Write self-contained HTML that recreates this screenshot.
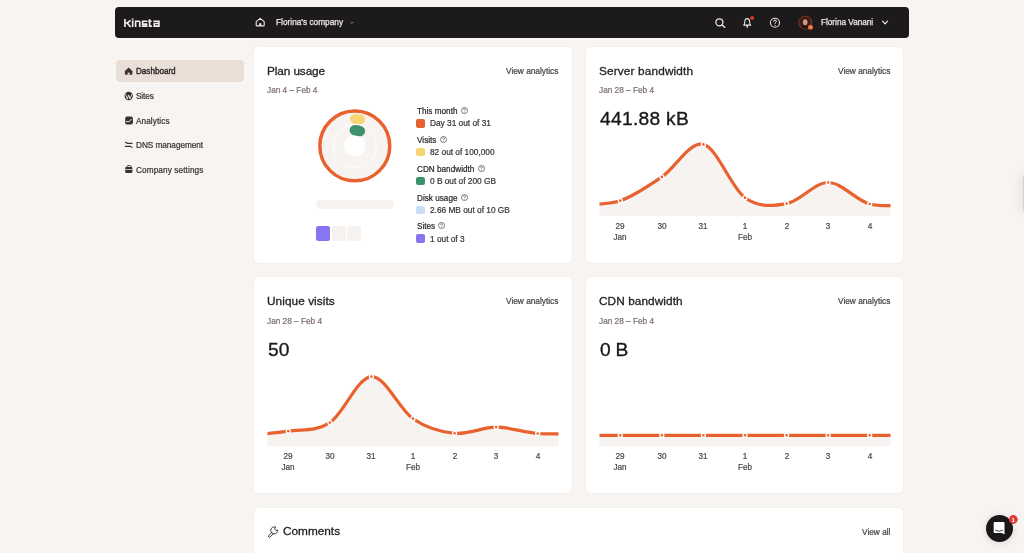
<!DOCTYPE html><html><head><meta charset="utf-8"><style>
html,body{margin:0;padding:0}
body{width:1024px;height:553px;overflow:hidden;background:#f7f4f1;position:relative;font-family:"Liberation Sans",sans-serif}
.t{position:absolute;white-space:nowrap;line-height:1;will-change:transform}
.card{position:absolute;background:#fff;border-radius:5px;box-shadow:0 0 0 0.5px rgba(140,110,90,0.06)}
.abs{position:absolute}
svg.L{position:absolute;left:0;top:0;overflow:visible}
svg.h{position:absolute;margin-left:3.2px;width:7px;height:7px;top:-1.1px}
</style></head><body>
<div class="abs" style="left:115px;top:7px;width:794px;height:30.6px;background:#1c1a1a;border-radius:4px"></div>
<div class="card" style="left:254px;top:47px;width:318px;height:216px"></div>
<div class="card" style="left:586px;top:47px;width:317.3px;height:216px"></div>
<div class="card" style="left:254px;top:277px;width:318px;height:216px"></div>
<div class="card" style="left:586px;top:277px;width:317.3px;height:216px"></div>
<div class="card" style="left:254px;top:507.5px;width:649.3px;height:100px"></div>
<div class="abs" style="left:115.5px;top:60px;width:128.8px;height:22.2px;background:#e9dfd7;border-radius:4px"></div>
<div class="t" style="left:276px;top:18px;font-size:8.3px;color:#ebe7e3;-webkit-text-stroke:0.25px #ebe7e3;">Florina's company</div>
<div class="t" style="left:820.7px;top:19px;font-size:8.2px;color:#ebe7e3;-webkit-text-stroke:0.25px #ebe7e3;">Florina Vanani</div>
<div class="t" style="left:136.3px;top:68px;font-size:8.2px;color:#2a2424;letter-spacing:-0.05px;-webkit-text-stroke:0.35px #2a2424;">Dashboard</div>
<div class="t" style="left:136.3px;top:93px;font-size:8.2px;color:#3a3232;letter-spacing:-0.1px;-webkit-text-stroke:0.22px #3a3232;">Sites</div>
<div class="t" style="left:136.3px;top:118px;font-size:8.2px;color:#3a3232;letter-spacing:0.1px;-webkit-text-stroke:0.22px #3a3232;">Analytics</div>
<div class="t" style="left:136.3px;top:142px;font-size:8.2px;color:#3a3232;letter-spacing:-0.02px;-webkit-text-stroke:0.22px #3a3232;">DNS management</div>
<div class="t" style="left:136.3px;top:167px;font-size:8.2px;color:#3a3232;letter-spacing:0.12px;-webkit-text-stroke:0.22px #3a3232;">Company settings</div>
<div class="t" style="left:267.1px;top:66px;font-size:11.8px;color:#262222;letter-spacing:-0.1px;-webkit-text-stroke:0.3px #262222;">Plan usage</div>
<div class="t" style="left:267.3px;top:87px;font-size:8.25px;color:#7e6f6f;-webkit-text-stroke:0.22px #7e6f6f;">Jan 4 – Feb 4</div>
<div class="t" style="right:465.4px;top:67px;font-size:8.3px;color:#4a4444;-webkit-text-stroke:0.22px #4a4444;">View analytics</div>
<div class="t" style="left:599.1px;top:66px;font-size:11.8px;color:#262222;letter-spacing:0.15px;-webkit-text-stroke:0.3px #262222;">Server bandwidth</div>
<div class="t" style="left:599.3px;top:87px;font-size:8.25px;color:#7e6f6f;-webkit-text-stroke:0.22px #7e6f6f;">Jan 28 – Feb 4</div>
<div class="t" style="right:133.39999999999998px;top:67px;font-size:8.3px;color:#4a4444;-webkit-text-stroke:0.22px #4a4444;">View analytics</div>
<div class="t" style="left:267.1px;top:296px;font-size:11.8px;color:#262222;letter-spacing:0.07px;-webkit-text-stroke:0.3px #262222;">Unique visits</div>
<div class="t" style="left:267.3px;top:318px;font-size:8.25px;color:#7e6f6f;-webkit-text-stroke:0.22px #7e6f6f;">Jan 28 – Feb 4</div>
<div class="t" style="right:465.4px;top:297px;font-size:8.3px;color:#4a4444;-webkit-text-stroke:0.22px #4a4444;">View analytics</div>
<div class="t" style="left:599.1px;top:296px;font-size:11.8px;color:#262222;letter-spacing:0.08px;-webkit-text-stroke:0.3px #262222;">CDN bandwidth</div>
<div class="t" style="left:599.3px;top:318px;font-size:8.25px;color:#7e6f6f;-webkit-text-stroke:0.22px #7e6f6f;">Jan 28 – Feb 4</div>
<div class="t" style="right:133.39999999999998px;top:297px;font-size:8.3px;color:#4a4444;-webkit-text-stroke:0.22px #4a4444;">View analytics</div>
<div class="t" style="left:600.0px;top:109px;font-size:19.2px;color:#1c1818;letter-spacing:0.3px;-webkit-text-stroke:0.35px #1c1818;">441.88 kB</div>
<div class="t" style="left:267.9px;top:340px;font-size:19.2px;color:#1c1818;letter-spacing:0.1px;-webkit-text-stroke:0.35px #1c1818;">50</div>
<div class="t" style="left:599.9px;top:340px;font-size:19.2px;color:#1c1818;letter-spacing:-0.2px;-webkit-text-stroke:0.35px #1c1818;">0 B</div>
<div class="t" style="left:416.6px;top:108px;font-size:8.2px;color:#2a2424;-webkit-text-stroke:0.2px #2a2424;">This month<svg class="h" viewBox="0 0 7 7"><circle cx="3.5" cy="3.5" r="3.05" fill="none" stroke="#5a5454" stroke-width="0.75"/><path d="M2.5,2.7 Q2.5,1.7 3.5,1.7 Q4.5,1.7 4.5,2.6 Q4.5,3.2 3.6,3.6 V4.2" fill="none" stroke="#5a5454" stroke-width="0.7"/><circle cx="3.6" cy="5.2" r="0.42" fill="#5a5454"/></svg></div>
<div class="abs" style="left:416.3px;top:118.75px;width:8.8px;height:8.8px;border-radius:2px;background:#e8622f"></div>
<div class="t" style="left:429.8px;top:119px;font-size:8.3px;color:#3a3434;-webkit-text-stroke:0.22px #3a3434;">Day 31 out of 31</div>
<div class="t" style="left:416.6px;top:137px;font-size:8.2px;color:#2a2424;-webkit-text-stroke:0.2px #2a2424;">Visits<svg class="h" viewBox="0 0 7 7"><circle cx="3.5" cy="3.5" r="3.05" fill="none" stroke="#5a5454" stroke-width="0.75"/><path d="M2.5,2.7 Q2.5,1.7 3.5,1.7 Q4.5,1.7 4.5,2.6 Q4.5,3.2 3.6,3.6 V4.2" fill="none" stroke="#5a5454" stroke-width="0.7"/><circle cx="3.6" cy="5.2" r="0.42" fill="#5a5454"/></svg></div>
<div class="abs" style="left:416.3px;top:147.50px;width:8.8px;height:8.8px;border-radius:2px;background:#f6d572"></div>
<div class="t" style="left:429.8px;top:148px;font-size:8.3px;color:#3a3434;-webkit-text-stroke:0.22px #3a3434;">82 out of 100,000</div>
<div class="t" style="left:416.6px;top:166px;font-size:8.2px;color:#2a2424;-webkit-text-stroke:0.2px #2a2424;">CDN bandwidth<svg class="h" viewBox="0 0 7 7"><circle cx="3.5" cy="3.5" r="3.05" fill="none" stroke="#5a5454" stroke-width="0.75"/><path d="M2.5,2.7 Q2.5,1.7 3.5,1.7 Q4.5,1.7 4.5,2.6 Q4.5,3.2 3.6,3.6 V4.2" fill="none" stroke="#5a5454" stroke-width="0.7"/><circle cx="3.6" cy="5.2" r="0.42" fill="#5a5454"/></svg></div>
<div class="abs" style="left:416.3px;top:176.50px;width:8.8px;height:8.8px;border-radius:2px;background:#3e926b"></div>
<div class="t" style="left:429.8px;top:177px;font-size:8.3px;color:#3a3434;-webkit-text-stroke:0.22px #3a3434;">0 B out of 200 GB</div>
<div class="t" style="left:416.6px;top:195px;font-size:8.2px;color:#2a2424;-webkit-text-stroke:0.2px #2a2424;">Disk usage<svg class="h" viewBox="0 0 7 7"><circle cx="3.5" cy="3.5" r="3.05" fill="none" stroke="#5a5454" stroke-width="0.75"/><path d="M2.5,2.7 Q2.5,1.7 3.5,1.7 Q4.5,1.7 4.5,2.6 Q4.5,3.2 3.6,3.6 V4.2" fill="none" stroke="#5a5454" stroke-width="0.7"/><circle cx="3.6" cy="5.2" r="0.42" fill="#5a5454"/></svg></div>
<div class="abs" style="left:416.3px;top:205.50px;width:8.8px;height:8.8px;border-radius:2px;background:#cadcf6"></div>
<div class="t" style="left:429.8px;top:206px;font-size:8.3px;color:#3a3434;-webkit-text-stroke:0.22px #3a3434;">2.66 MB out of 10 GB</div>
<div class="t" style="left:416.6px;top:223px;font-size:8.2px;color:#2a2424;-webkit-text-stroke:0.2px #2a2424;">Sites<svg class="h" viewBox="0 0 7 7"><circle cx="3.5" cy="3.5" r="3.05" fill="none" stroke="#5a5454" stroke-width="0.75"/><path d="M2.5,2.7 Q2.5,1.7 3.5,1.7 Q4.5,1.7 4.5,2.6 Q4.5,3.2 3.6,3.6 V4.2" fill="none" stroke="#5a5454" stroke-width="0.7"/><circle cx="3.6" cy="5.2" r="0.42" fill="#5a5454"/></svg></div>
<div class="abs" style="left:416.3px;top:234.10px;width:8.8px;height:8.8px;border-radius:2px;background:#8676f1"></div>
<div class="t" style="left:429.8px;top:235px;font-size:8.3px;color:#3a3434;-webkit-text-stroke:0.22px #3a3434;">1 out of 3</div>
<div class="t" style="left:570.2857142857143px;width:100px;text-align:center;top:223px;font-size:8.2px;color:#4f4949;-webkit-text-stroke:0.22px #4f4949;">29</div>
<div class="t" style="left:611.8571428571429px;width:100px;text-align:center;top:223px;font-size:8.2px;color:#4f4949;-webkit-text-stroke:0.22px #4f4949;">30</div>
<div class="t" style="left:653.4285714285714px;width:100px;text-align:center;top:223px;font-size:8.2px;color:#4f4949;-webkit-text-stroke:0.22px #4f4949;">31</div>
<div class="t" style="left:695.0px;width:100px;text-align:center;top:223px;font-size:8.2px;color:#4f4949;-webkit-text-stroke:0.22px #4f4949;">1</div>
<div class="t" style="left:736.5714285714286px;width:100px;text-align:center;top:223px;font-size:8.2px;color:#4f4949;-webkit-text-stroke:0.22px #4f4949;">2</div>
<div class="t" style="left:778.1428571428571px;width:100px;text-align:center;top:223px;font-size:8.2px;color:#4f4949;-webkit-text-stroke:0.22px #4f4949;">3</div>
<div class="t" style="left:819.7142857142858px;width:100px;text-align:center;top:223px;font-size:8.2px;color:#4f4949;-webkit-text-stroke:0.22px #4f4949;">4</div>
<div class="t" style="left:570.2857142857143px;width:100px;text-align:center;top:234px;font-size:8.2px;color:#4f4949;-webkit-text-stroke:0.22px #4f4949;">Jan</div>
<div class="t" style="left:695.0px;width:100px;text-align:center;top:234px;font-size:8.2px;color:#4f4949;-webkit-text-stroke:0.22px #4f4949;">Feb</div>
<div class="t" style="left:238.28571428571428px;width:100px;text-align:center;top:453px;font-size:8.2px;color:#4f4949;-webkit-text-stroke:0.22px #4f4949;">29</div>
<div class="t" style="left:279.85714285714283px;width:100px;text-align:center;top:453px;font-size:8.2px;color:#4f4949;-webkit-text-stroke:0.22px #4f4949;">30</div>
<div class="t" style="left:321.42857142857144px;width:100px;text-align:center;top:453px;font-size:8.2px;color:#4f4949;-webkit-text-stroke:0.22px #4f4949;">31</div>
<div class="t" style="left:363.0px;width:100px;text-align:center;top:453px;font-size:8.2px;color:#4f4949;-webkit-text-stroke:0.22px #4f4949;">1</div>
<div class="t" style="left:404.57142857142856px;width:100px;text-align:center;top:453px;font-size:8.2px;color:#4f4949;-webkit-text-stroke:0.22px #4f4949;">2</div>
<div class="t" style="left:446.1428571428571px;width:100px;text-align:center;top:453px;font-size:8.2px;color:#4f4949;-webkit-text-stroke:0.22px #4f4949;">3</div>
<div class="t" style="left:487.7142857142858px;width:100px;text-align:center;top:453px;font-size:8.2px;color:#4f4949;-webkit-text-stroke:0.22px #4f4949;">4</div>
<div class="t" style="left:238.28571428571428px;width:100px;text-align:center;top:464px;font-size:8.2px;color:#4f4949;-webkit-text-stroke:0.22px #4f4949;">Jan</div>
<div class="t" style="left:363.0px;width:100px;text-align:center;top:464px;font-size:8.2px;color:#4f4949;-webkit-text-stroke:0.22px #4f4949;">Feb</div>
<div class="t" style="left:570.2857142857143px;width:100px;text-align:center;top:453px;font-size:8.2px;color:#4f4949;-webkit-text-stroke:0.22px #4f4949;">29</div>
<div class="t" style="left:611.8571428571429px;width:100px;text-align:center;top:453px;font-size:8.2px;color:#4f4949;-webkit-text-stroke:0.22px #4f4949;">30</div>
<div class="t" style="left:653.4285714285714px;width:100px;text-align:center;top:453px;font-size:8.2px;color:#4f4949;-webkit-text-stroke:0.22px #4f4949;">31</div>
<div class="t" style="left:695.0px;width:100px;text-align:center;top:453px;font-size:8.2px;color:#4f4949;-webkit-text-stroke:0.22px #4f4949;">1</div>
<div class="t" style="left:736.5714285714286px;width:100px;text-align:center;top:453px;font-size:8.2px;color:#4f4949;-webkit-text-stroke:0.22px #4f4949;">2</div>
<div class="t" style="left:778.1428571428571px;width:100px;text-align:center;top:453px;font-size:8.2px;color:#4f4949;-webkit-text-stroke:0.22px #4f4949;">3</div>
<div class="t" style="left:819.7142857142858px;width:100px;text-align:center;top:453px;font-size:8.2px;color:#4f4949;-webkit-text-stroke:0.22px #4f4949;">4</div>
<div class="t" style="left:570.2857142857143px;width:100px;text-align:center;top:464px;font-size:8.2px;color:#4f4949;-webkit-text-stroke:0.22px #4f4949;">Jan</div>
<div class="t" style="left:695.0px;width:100px;text-align:center;top:464px;font-size:8.2px;color:#4f4949;-webkit-text-stroke:0.22px #4f4949;">Feb</div>
<div class="t" style="left:283.2px;top:526px;font-size:11.8px;color:#262222;-webkit-text-stroke:0.3px #262222;">Comments</div>
<div class="t" style="right:133.39999999999998px;top:528px;font-size:8.3px;color:#4a4444;-webkit-text-stroke:0.22px #4a4444;">View all</div>
<svg class="L" width="1024" height="553" viewBox="0 0 1024 553">
<clipPath id="c1"><rect x="599.5" y="0" width="291.0" height="216"/></clipPath><g clip-path="url(#c1)"><path d="M578.71,204.78 C585.64,204.10 606.43,205.35 620.29,200.70 C634.14,196.05 648.00,186.28 661.86,176.90 C675.71,167.52 689.57,140.93 703.43,144.40 C717.29,147.87 731.14,187.83 745.00,197.70 C758.86,207.57 772.71,206.13 786.57,203.60 C800.43,201.07 814.29,182.43 828.14,182.50 C842.00,182.57 855.86,200.31 869.71,204.00 C883.57,207.69 904.36,204.54 911.29,204.65 L911.29,216 L578.71,216 Z" fill="#f7f3f0"/><path d="M578.71,204.78 C585.64,204.10 606.43,205.35 620.29,200.70 C634.14,196.05 648.00,186.28 661.86,176.90 C675.71,167.52 689.57,140.93 703.43,144.40 C717.29,147.87 731.14,187.83 745.00,197.70 C758.86,207.57 772.71,206.13 786.57,203.60 C800.43,201.07 814.29,182.43 828.14,182.50 C842.00,182.57 855.86,200.31 869.71,204.00 C883.57,207.69 904.36,204.54 911.29,204.65" fill="none" stroke="#e8622f" stroke-width="3.2"/></g><circle cx="620.29" cy="200.70" r="2" fill="#e8622f" stroke="#fff" stroke-width="1.3"/><circle cx="661.86" cy="176.90" r="2" fill="#e8622f" stroke="#fff" stroke-width="1.3"/><circle cx="703.43" cy="144.40" r="2" fill="#e8622f" stroke="#fff" stroke-width="1.3"/><circle cx="745.00" cy="197.70" r="2" fill="#e8622f" stroke="#fff" stroke-width="1.3"/><circle cx="786.57" cy="203.60" r="2" fill="#e8622f" stroke="#fff" stroke-width="1.3"/><circle cx="828.14" cy="182.50" r="2" fill="#e8622f" stroke="#fff" stroke-width="1.3"/><circle cx="869.71" cy="204.00" r="2" fill="#e8622f" stroke="#fff" stroke-width="1.3"/>
<clipPath id="c2"><rect x="267.5" y="0" width="291.0" height="446.5"/></clipPath><g clip-path="url(#c2)"><path d="M246.71,435.63 C253.64,434.89 274.43,433.37 288.29,431.20 C302.14,429.03 316.00,431.70 329.86,422.60 C343.71,413.50 357.57,377.25 371.43,376.60 C385.29,375.95 399.14,409.25 413.00,418.70 C426.86,428.15 440.71,431.88 454.57,433.30 C468.43,434.72 482.29,427.17 496.14,427.20 C510.00,427.23 523.86,432.46 537.71,433.50 C551.57,434.54 572.36,433.43 579.29,433.41 L579.29,446.5 L246.71,446.5 Z" fill="#f7f3f0"/><path d="M246.71,435.63 C253.64,434.89 274.43,433.37 288.29,431.20 C302.14,429.03 316.00,431.70 329.86,422.60 C343.71,413.50 357.57,377.25 371.43,376.60 C385.29,375.95 399.14,409.25 413.00,418.70 C426.86,428.15 440.71,431.88 454.57,433.30 C468.43,434.72 482.29,427.17 496.14,427.20 C510.00,427.23 523.86,432.46 537.71,433.50 C551.57,434.54 572.36,433.43 579.29,433.41" fill="none" stroke="#e8622f" stroke-width="3.2"/></g><circle cx="288.29" cy="431.20" r="2" fill="#e8622f" stroke="#fff" stroke-width="1.3"/><circle cx="329.86" cy="422.60" r="2" fill="#e8622f" stroke="#fff" stroke-width="1.3"/><circle cx="371.43" cy="376.60" r="2" fill="#e8622f" stroke="#fff" stroke-width="1.3"/><circle cx="413.00" cy="418.70" r="2" fill="#e8622f" stroke="#fff" stroke-width="1.3"/><circle cx="454.57" cy="433.30" r="2" fill="#e8622f" stroke="#fff" stroke-width="1.3"/><circle cx="496.14" cy="427.20" r="2" fill="#e8622f" stroke="#fff" stroke-width="1.3"/><circle cx="537.71" cy="433.50" r="2" fill="#e8622f" stroke="#fff" stroke-width="1.3"/>
<clipPath id="c3"><rect x="599.5" y="0" width="291.0" height="446.5"/></clipPath><g clip-path="url(#c3)"><path d="M578.71,435.30 C585.64,435.30 606.43,435.30 620.29,435.30 C634.14,435.30 648.00,435.30 661.86,435.30 C675.71,435.30 689.57,435.30 703.43,435.30 C717.29,435.30 731.14,435.30 745.00,435.30 C758.86,435.30 772.71,435.30 786.57,435.30 C800.43,435.30 814.29,435.30 828.14,435.30 C842.00,435.30 855.86,435.30 869.71,435.30 C883.57,435.30 904.36,435.30 911.29,435.30 L911.29,446.5 L578.71,446.5 Z" fill="#f7f3f0"/><path d="M578.71,435.30 C585.64,435.30 606.43,435.30 620.29,435.30 C634.14,435.30 648.00,435.30 661.86,435.30 C675.71,435.30 689.57,435.30 703.43,435.30 C717.29,435.30 731.14,435.30 745.00,435.30 C758.86,435.30 772.71,435.30 786.57,435.30 C800.43,435.30 814.29,435.30 828.14,435.30 C842.00,435.30 855.86,435.30 869.71,435.30 C883.57,435.30 904.36,435.30 911.29,435.30" fill="none" stroke="#e8622f" stroke-width="3.2"/></g><circle cx="620.29" cy="435.30" r="2" fill="#e8622f" stroke="#fff" stroke-width="1.3"/><circle cx="661.86" cy="435.30" r="2" fill="#e8622f" stroke="#fff" stroke-width="1.3"/><circle cx="703.43" cy="435.30" r="2" fill="#e8622f" stroke="#fff" stroke-width="1.3"/><circle cx="745.00" cy="435.30" r="2" fill="#e8622f" stroke="#fff" stroke-width="1.3"/><circle cx="786.57" cy="435.30" r="2" fill="#e8622f" stroke="#fff" stroke-width="1.3"/><circle cx="828.14" cy="435.30" r="2" fill="#e8622f" stroke="#fff" stroke-width="1.3"/><circle cx="869.71" cy="435.30" r="2" fill="#e8622f" stroke="#fff" stroke-width="1.3"/>
<circle cx="354.8" cy="145.9" r="33.2" fill="#f6f3f0"/>
<circle cx="354.8" cy="145.9" r="10.7" fill="#fff"/>
<circle cx="354.8" cy="145.9" r="21.5" fill="none" stroke="#fff" stroke-width="0.9"/>
<circle cx="354.8" cy="145.9" r="34.95" fill="none" stroke="#e8622f" stroke-width="3.5"/>
<path d="M354.80,118.90 A27,27 0 0 1 360.41,119.49" stroke="#f6d572" stroke-width="9.5" stroke-linecap="round" fill="none"/>
<path d="M354.80,130.20 A15.7,15.7 0 0 1 359.91,131.06" stroke="#3e926b" stroke-width="10.4" stroke-linecap="round" fill="none"/>
<g fill="none" stroke="#f2efec" stroke-width="1.65" stroke-linejoin="miter"><path d="M124.95,18.9 V27"/><path d="M124.95,23 H127.2 L130.6,20.3 M127.2,23 L130.6,27"/><path d="M132.65,20.4 V27"/><path d="M135.6,27 V21.25 H138.8 Q139.75,21.25 139.75,22.2 V27"/><path d="M147.4,21.25 H142.6 V24.1 H146.6 V26.15 H141.7"/><path d="M149.6,19.3 V26.15 H151.9 M148.2,21.25 H151.6"/><path d="M153.4,21.25 H158.9 V27 M158.9,26.15 H154.25 V23.5 H158.9"/></g>
<rect x="131.8" y="18.4" width="1.7" height="1.3" fill="#f2efec"/>
<path d="M256.2,21.7 L260.2,18.3 L264.2,21.7 V25.5 Q264.2,25.9 263.8,25.9 H256.6 Q256.2,25.9 256.2,25.5 Z" fill="none" stroke="#ebe7e3" stroke-width="1.1" stroke-linejoin="round"/><rect x="259.1" y="23.2" width="2.2" height="2.7" fill="#ebe7e3"/>
<path d="M350.3,21.9 L351.8,23.5 L353.3,21.9" fill="none" stroke="#8f8a87" stroke-width="0.9"/>
<circle cx="719.4" cy="22.3" r="3.55" fill="none" stroke="#ebe7e3" stroke-width="1.25"/><path d="M722.1,25 L724.7,27.3" stroke="#ebe7e3" stroke-width="1.5" stroke-linecap="round"/>
<path d="M743.7,25.1 Q744.8,24 744.8,22.2 Q744.8,18.6 747.2,18.6 Q749.6,18.6 749.6,22.2 Q749.6,24 750.7,25.1 Z" fill="none" stroke="#ebe7e3" stroke-width="1.1" stroke-linejoin="round"/><path d="M747.2,25.3 V27.3" stroke="#ebe7e3" stroke-width="1.3" stroke-linecap="round"/><circle cx="752.1" cy="17.9" r="1.9" fill="#e0332d"/>
<circle cx="775" cy="22.75" r="4.55" fill="none" stroke="#ebe7e3" stroke-width="1.05"/><path d="M773.6,21.6 Q773.6,20.1 775,20.1 Q776.4,20.1 776.4,21.4 Q776.4,22.3 775.1,22.9 V23.8" fill="none" stroke="#ebe7e3" stroke-width="1"/><circle cx="775.1" cy="25.3" r="0.6" fill="#ebe7e3"/>
<circle cx="805.3" cy="22.6" r="6.9" fill="#8a3a2c"/><circle cx="805.3" cy="22.6" r="6.0" fill="#3b1d18"/><ellipse cx="805.2" cy="22.2" rx="2.3" ry="3.0" fill="#c89a88"/><path d="M800.8,27.5 Q805.3,24.6 809.8,27.5 Q805.3,30 800.8,27.5Z" fill="#241210"/><circle cx="810.5" cy="27.3" r="2.5" fill="#ea6a2a"/><path d="M809.5,27.6 Q810.5,26.6 811.5,27.6" fill="none" stroke="#fff" stroke-width="0.5"/>
<path d="M882.6,21.1 L885.1,23.8 L887.6,21.1" fill="none" stroke="#ebe7e3" stroke-width="1.2" stroke-linecap="round" stroke-linejoin="round"/>
<path d="M124.9,71.1 L128.65,67.6 L132.4,71.1 V74.1 Q132.4,74.75 131.75,74.75 H125.55 Q124.9,74.75 124.9,74.1 Z" fill="#3a3232"/><path d="M127.6,74.75 V73.4 Q127.6,72.5 128.65,72.5 Q129.7,72.5 129.7,73.4 V74.75 Z" fill="#e9e0d9"/>
<circle cx="128.7" cy="96" r="4.2" fill="#3a3232"/><path d="M125.6,94.2 L127.3,99 L128.7,95.1 L130.1,99 L131.8,94.2" fill="none" stroke="#f7f4f1" stroke-width="0.85"/>
<rect x="125.2" y="116.4" width="7.7" height="8.2" rx="1.8" fill="#3a3232"/><path d="M126.4,121.6 H129.4 L131.2,119.3" fill="none" stroke="#f7f4f1" stroke-width="0.9" stroke-linecap="round"/>
<path d="M125.5,142.3 L127.3,143.3 H132.1 M125.2,146.3 H130.5 L131.9,147.4" fill="none" stroke="#3a3232" stroke-width="1.2" stroke-linecap="round"/>
<rect x="127" y="165.6" width="4" height="2.2" rx="0.8" fill="none" stroke="#3a3232" stroke-width="0.9"/><rect x="125.2" y="167" width="7.2" height="6" rx="1" fill="#3a3232"/><path d="M125.2,169.5 H132.4" stroke="#f7f4f1" stroke-width="0.7"/>
<g fill="none" stroke="#2a2626" stroke-width="0.9" stroke-linejoin="round" stroke-linecap="round"><path d="M275.3,527.0 A3.5,3.5 0 1 0 277.7,530.0 L275.9,530.4 L274.9,529.2 Z"/><path d="M272.0,532.4 L268.6,535.6 Q268.0,536.3 268.7,537.0 Q269.4,537.6 270.1,537.0 L273.5,533.6"/></g>
</svg>
<div class="abs" style="left:316px;top:200px;width:78px;height:9.2px;border-radius:5px;background:#f6f2ef"></div>
<div class="abs" style="left:316px;top:226.2px;width:14.4px;height:14.6px;border-radius:2.2px;background:#8676f1"></div>
<div class="abs" style="left:331.6px;top:226.2px;width:14.2px;height:14.6px;border-radius:2.2px;background:#f6f2ef"></div>
<div class="abs" style="left:347px;top:226.2px;width:14.4px;height:14.6px;border-radius:2.2px;background:#f6f2ef"></div>
<div class="abs" style="left:1023px;top:174.5px;width:10px;height:37.5px;background:#d6d2cf;border-radius:3px;box-shadow:0 0 12px rgba(60,40,30,0.14)"></div>
<div class="abs" style="left:986px;top:515px;width:27px;height:27px;border-radius:50%;background:#1a1818;box-shadow:0 1px 8px rgba(0,0,0,0.12)"></div>
<svg class="L" width="1024" height="553" viewBox="0 0 1024 553"><path d="M994.5,522 H1003.6 Q1004.5,522 1004.5,522.9 V534.6 L1001.8,533 H994.5 Q993.7,533 993.7,532.2 V522.9 Q993.7,522 994.5,522 Z" fill="#fff"/><path d="M995.3,530.2 Q999.1,532.4 1002.9,530.2" fill="none" stroke="#1a1818" stroke-width="0.8"/><circle cx="1013.3" cy="519.5" r="4.4" fill="#e03a32"/><text x="1013.3" y="521.9" font-family="Liberation Sans" font-weight="700" font-size="6.2" fill="#fff" text-anchor="middle">1</text></svg>
</body></html>
